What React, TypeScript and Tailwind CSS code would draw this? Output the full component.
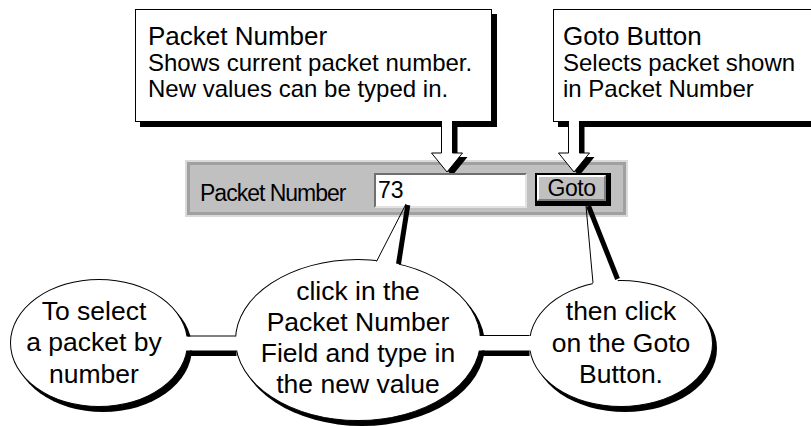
import React from 'react';

// Callout boxes at the top of the diagram
function NoteBox({
	className,
	title,
	lines,
}: {
	className: string;
	title: string;
	lines: string[];
}) {
	return (
		<div
			className={`h-[113px] shrink-0 border border-black bg-white pt-[12px] text-black shadow-[5px_5px_0_0_#000] ${className}`}
		>
			<div className="whitespace-nowrap text-[26px] leading-[28px]">{title}</div>
			{lines.map((line) => (
				<div key={line} className="whitespace-nowrap text-[24px] leading-[26px]">
					{line}
				</div>
			))}
		</div>
	);
}

// Speech bubbles at the bottom
function Bubble({ className, lines }: { className: string; lines: string[] }) {
	return (
		<div
			className={`flex shrink-0 flex-col items-center justify-center rounded-[50%] border border-black bg-white text-center text-[26.5px] text-black shadow-[4px_5px_0_0_#000] ${className}`}
		>
			{lines.map((line) => (
				<div key={line} className="whitespace-nowrap">
					{line}
				</div>
			))}
		</div>
	);
}

function DownArrow({ cx }: { cx: number }) {
	const pts = (dx: number, dy: number) =>
		[
			[cx - 5.5, 121],
			[cx - 5.5, 153],
			[cx - 15.5, 153],
			[cx, 172],
			[cx + 15.5, 153],
			[cx + 5.5, 153],
			[cx + 5.5, 121],
		]
			.map(([x, y]) => `${x + dx},${y + dy}`)
			.join(' ');
	return (
		<g>
			<polygon points={pts(5, 4)} fill="#000" clipPath="url(#above-field)" />
			<polygon points={pts(0, 0)} fill="#fff" />
			<polyline points={pts(0, 0)} fill="none" stroke="#000" strokeWidth={1} />
		</g>
	);
}

function Toolbar() {
	return (
		<div className="ml-[185px] mt-[38px] h-[57px] w-[443px] border-2 border-[#dadada] bg-[#c0c0c0]">
			<div className="flex h-full items-start border-[3px] border-[#a0a0a0] pl-[10px] pt-[8px] text-[23px] text-black">
				<div className="w-[174px] self-center whitespace-nowrap tracking-[-1px] leading-[26px]">
					Packet Number
				</div>
				<div className="flex h-[35px] w-[153px] items-center border-2 border-b-[#e2e2e2] border-l-[#6f6f6f] border-r-[#e2e2e2] border-t-[#6f6f6f] bg-white pl-[2px] leading-none">
					73
				</div>
				<div className="ml-[8px] h-[33px] w-[76px] border-b-[5px] border-l-2 border-r-[5px] border-t-2 border-black">
					<div className="flex h-full items-center justify-center border-2 border-b-[#808080] border-l-white border-r-[#808080] border-t-white bg-[#c0c0c0] tracking-[-0.5px] leading-none">
						Goto
					</div>
				</div>
			</div>
		</div>
	);
}

export default function App() {
	return (
		<div className="relative h-[426px] w-[811px] overflow-hidden bg-white font-['Liberation_Sans',Arial,sans-serif]">
			<div className="flex flex-col pt-[9px]">
				<div className="flex gap-[61px] pl-[135px]">
					<NoteBox
						className="w-[357px] pl-[12px]"
						title="Packet Number"
						lines={['Shows current packet number.', 'New values can be typed in.']}
					/>
					<NoteBox
						className="w-[300px] pl-[9px]"
						title="Goto Button"
						lines={['Selects packet shown', 'in Packet Number']}
					/>
				</div>

				<Toolbar />

				<div className="mt-[42px] flex items-center gap-[47px] pl-[10px]">
					<Bubble
						className="mt-[6px] h-[128px] w-[178px] pr-[10px] leading-[31.5px]"
						lines={['To select', 'a packet by', 'number']}
					/>
					<Bubble
						className="h-[162px] w-[246px] pb-[5px] leading-[31px]"
						lines={['click in the', 'Packet Number', 'Field and type in', 'the new value']}
					/>
					<Bubble
						className="ml-[1px] mt-[7px] h-[127px] w-[184px] leading-[31.5px]"
						lines={['then click', 'on the Goto', 'Button.']}
					/>
				</div>
			</div>

			{/* arrows, connectors and bubble tails drawn over the canvas */}
			<svg
				className="pointer-events-none absolute inset-0"
				width={811}
				height={426}
				viewBox="0 0 811 426"
			>
				<defs>
					<clipPath id="above-field">
						<rect x={0} y={0} width={811} height={173} />
					</clipPath>
				</defs>

				<DownArrow cx={447} />
				<DownArrow cx={574} />

				{/* bar between left and middle bubble */}
				<rect x={185} y={336.5} width={53} height={14} fill="#fff" />
				<line x1={187.5} y1={336} x2={235.5} y2={336} stroke="#000" strokeWidth={1} />
				<rect x={190} y={350.5} width={46.5} height={5.5} fill="#000" />

				{/* bar between middle and right bubble */}
				<rect x={478} y={336} width={54} height={14.5} fill="#fff" />
				<line x1={480.5} y1={335.5} x2={529.5} y2={335.5} stroke="#000" strokeWidth={1} />
				<rect x={482} y={350.5} width={47.5} height={5.5} fill="#000" />

				{/* tail of middle bubble */}
				<polygon points="406,217 376.3,261 377,265 398,267.5 399.5,262" fill="#fff" />
				<line x1={406} y1={204} x2={376.5} y2={261.5} stroke="#000" strokeWidth={1} />
				<line x1={407.8} y1={205} x2={398.5} y2={264} stroke="#000" strokeWidth={5} />

				{/* tail of right bubble */}
				<polygon points="587,217 592.2,217 618,279 617,284.5 593,285.5" fill="#fff" />
				<line x1={586} y1={206} x2={593} y2={283} stroke="#000" strokeWidth={1} />
				<line x1={588.5} y1={206} x2={617.5} y2={279} stroke="#000" strokeWidth={5} />
			</svg>
		</div>
	);
}
